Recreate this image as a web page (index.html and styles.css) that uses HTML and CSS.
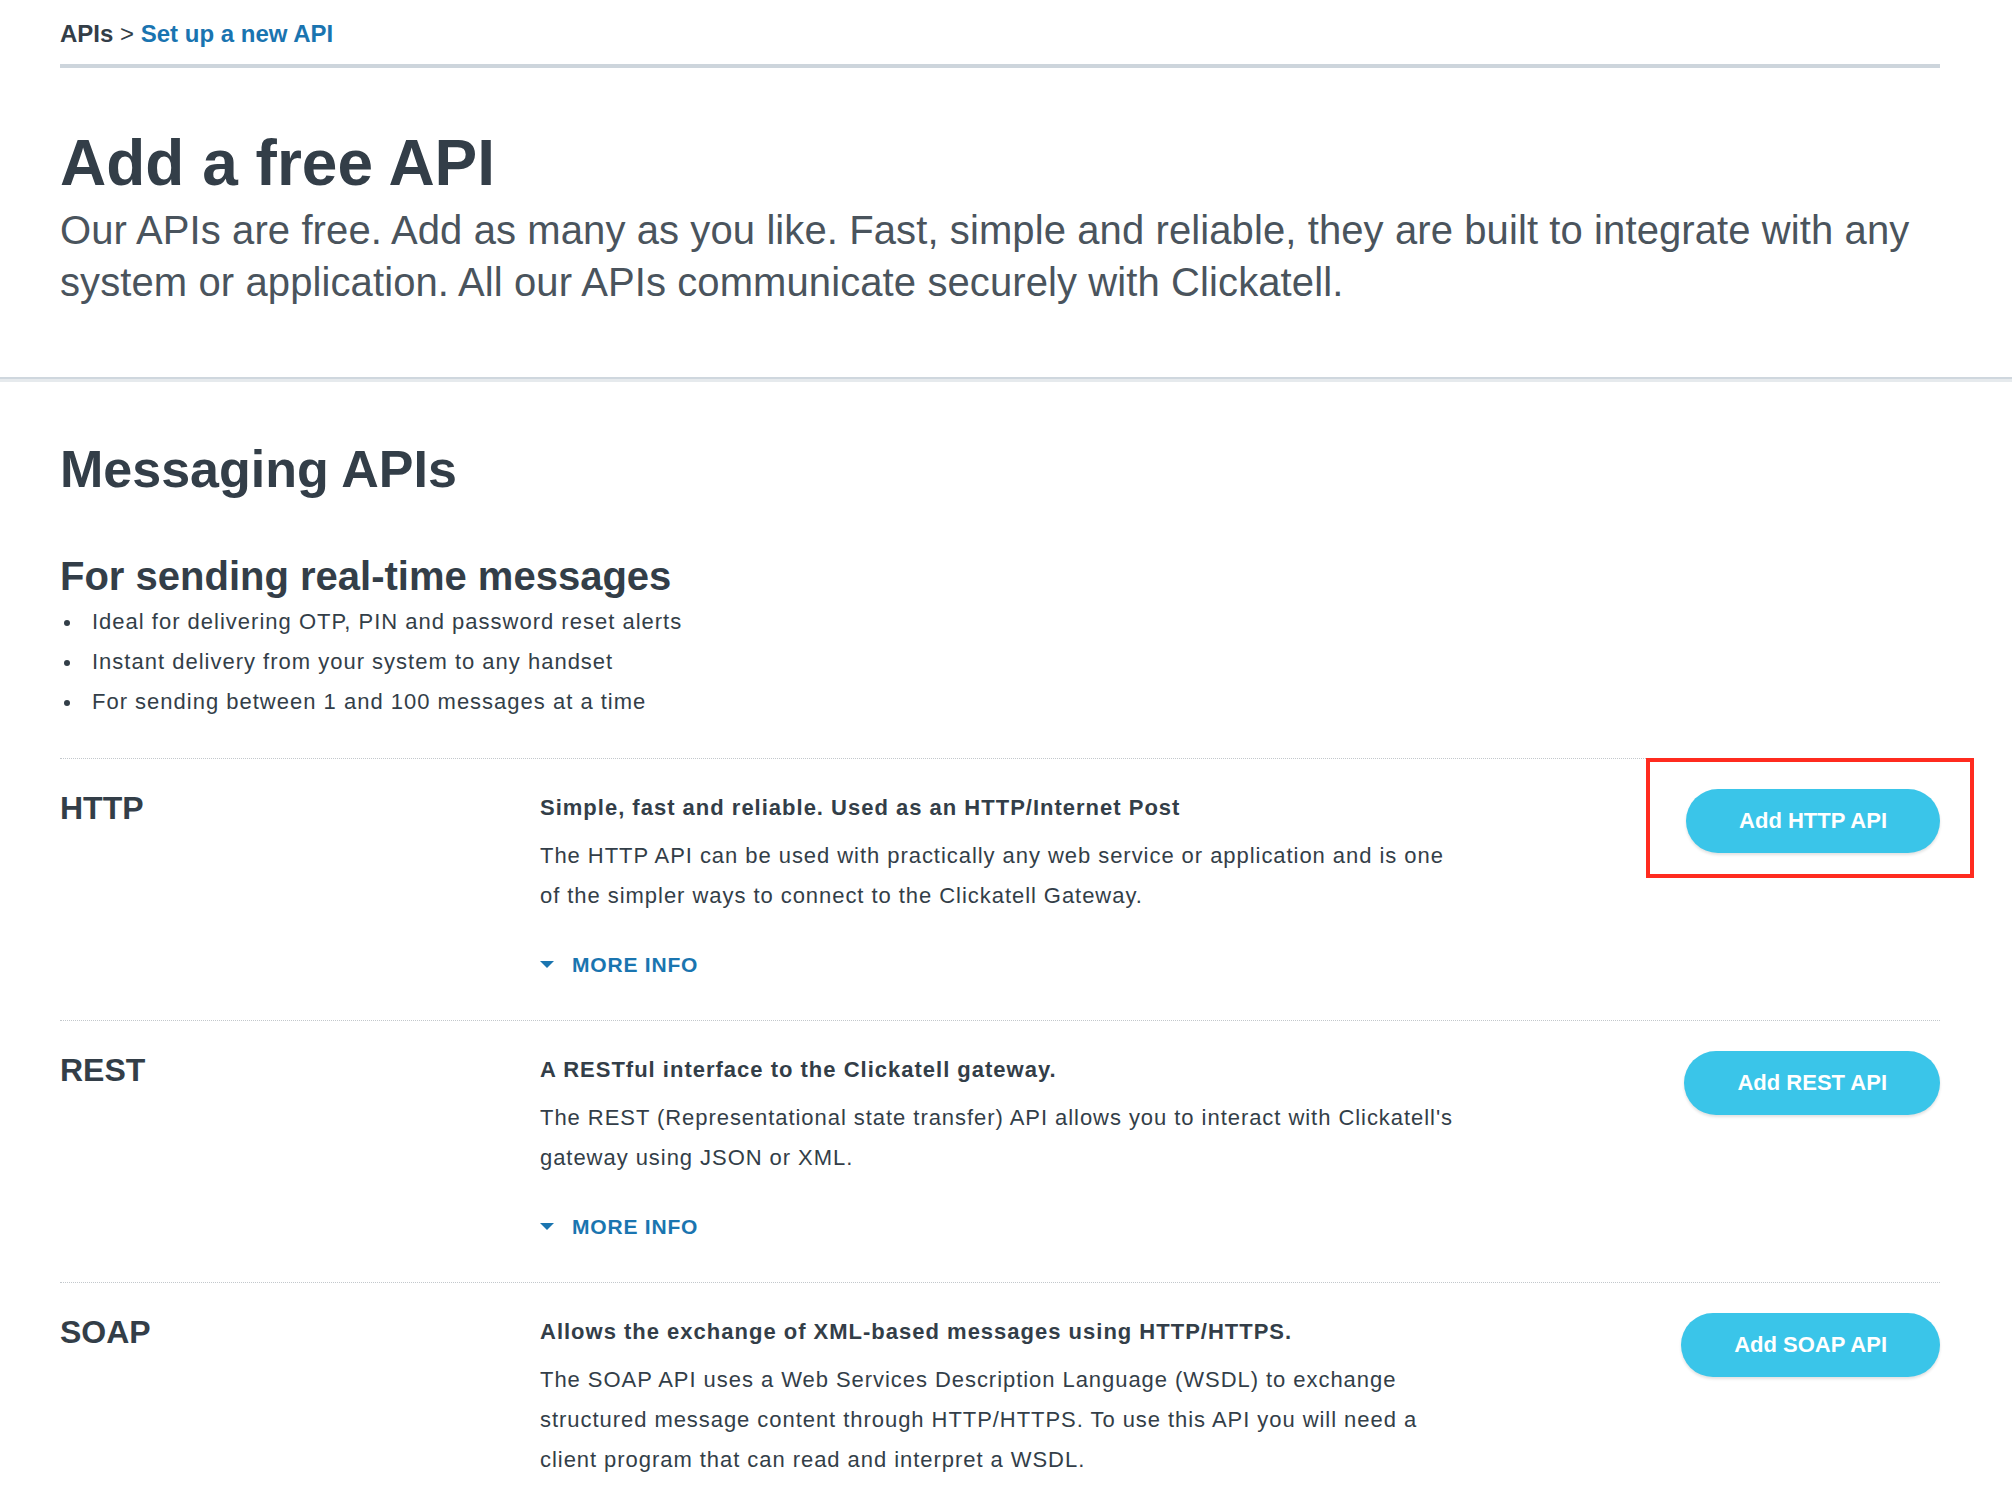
FILE: index.html
```html
<!DOCTYPE html>
<html lang="en">
<head>
    <meta charset="UTF-8">
    <title>Set up a new API</title>
    <link rel="stylesheet" href="styles.css">
</head>
<body>
<div class="wrap">
    <div class="crumbs">
        <span class="crumb-root">APIs</span> &gt; <a href="#" class="crumb-cur">Set up a new API</a>
    </div>
    <h1>Add a free API</h1>
    <p class="lead">Our APIs are free. Add as many as you like. Fast, simple and reliable, they are built to integrate with any system or application. All our APIs communicate securely with Clickatell.</p>
</div>
<div class="divider"></div>
<div class="wrap">
    <h2>Messaging APIs</h2>
    <h3>For sending real-time messages</h3>
    <ul class="points">
        <li>Ideal for delivering OTP, PIN and password reset alerts</li>
        <li>Instant delivery from your system to any handset</li>
        <li>For sending between 1 and 100 messages at a time</li>
    </ul>

    <div class="api">
        <div class="api-name">HTTP</div>
        <div class="api-info">
            <div class="api-title">Simple, fast and reliable. Used as an HTTP/Internet Post</div>
            <p>The HTTP API can be used with practically any web service or application and is one of the simpler ways to connect to the Clickatell Gateway.</p>
            <a href="#" class="more"><i class="caret"></i>MORE INFO</a>
        </div>
        <div class="api-action">
            <a href="#" class="btn">Add HTTP API</a>
            <div class="highlight"></div>
        </div>
    </div>

    <div class="api">
        <div class="api-name">REST</div>
        <div class="api-info">
            <div class="api-title">A RESTful interface to the Clickatell gateway.</div>
            <p>The REST (Representational state transfer) API allows you to interact with Clickatell's gateway using JSON or XML.</p>
            <a href="#" class="more"><i class="caret"></i>MORE INFO</a>
        </div>
        <div class="api-action">
            <a href="#" class="btn">Add REST API</a>
        </div>
    </div>

    <div class="api">
        <div class="api-name">SOAP</div>
        <div class="api-info">
            <div class="api-title">Allows the exchange of XML-based messages using HTTP/HTTPS.</div>
            <p>The SOAP API uses a Web Services Description Language (WSDL) to exchange structured message content through HTTP/HTTPS. To use this API you will need a client program that can read and interpret a WSDL.</p>
        </div>
        <div class="api-action">
            <a href="#" class="btn">Add SOAP API</a>
        </div>
    </div>
</div>
</body>
</html>
```

FILE: styles.css
```css
body{
    margin: 0;
    font-family: "Liberation Sans", Arial, sans-serif;
    color: #333e48;
    background: #fff;
}
a{
    text-decoration: none;
}
.wrap{
    width: 1880px;
    margin-left: 60px;
}
/*面包屑*/
.crumbs{
    padding-top: 19px;
    padding-bottom: 15px;
    line-height: 30px;
    font-size: 24px;
    border-bottom: 4px solid #cdd5dc;
}
.crumb-root{
    font-weight: bold;
}
.crumb-cur{
    font-weight: bold;
    color: #1a74b0;
}
h1{
    margin: 59px 0 0;
    font-size: 64px;
    line-height: 72px;
}
.lead{
    margin: 5px 0 0;
    padding-bottom: 69px;
    font-size: 40px;
    line-height: 52px;
    letter-spacing: 0.1px;
    color: #4a545d;
}
.divider{
    height: 3px;
    border-top: 2px solid #cfd7de;
    background: #e6eaed;
}
h2{
    margin: 57px 0 0;
    font-size: 52px;
    line-height: 60px;
}
h3{
    margin: 54px 0 0;
    font-size: 40px;
    line-height: 46px;
}
.points{
    margin: 3px 0 0;
    padding: 0;
    list-style: none;
    font-size: 22px;
    line-height: 40px;
    letter-spacing: 1px;
}
.points li{
    display: flex;
    align-items: center;
}
.points li:before{
    content: "";
    width: 6px;
    height: 6px;
    margin: 2px 22px 0 4px;
    border-radius: 50%;
    background: #333e48;
}
/*每一行API*/
.api{
    display: grid;
    grid-template-columns: 480px 925px 1fr;
    border-top: 1px dotted #c3c8cc;
    padding: 29px 0 35px;
}
.points + .api{
    margin-top: 36px;
}
.api-name{
    font-size: 32px;
    font-weight: bold;
    line-height: 40px;
}
.api-title{
    font-size: 22px;
    font-weight: bold;
    line-height: 40px;
    letter-spacing: 1px;
}
.api-info p{
    margin: 8px 0 0;
    font-size: 22px;
    line-height: 40px;
    letter-spacing: 0.95px;
}
.more{
    display: inline-block;
    margin-top: 29px;
    font-size: 21px;
    font-weight: bold;
    line-height: 40px;
    letter-spacing: 0.8px;
    color: #1a75b0;
}
.caret{
    display: inline-block;
    vertical-align: middle;
    margin: -4px 18px 0 0;
    border-left: 7px solid transparent;
    border-right: 7px solid transparent;
    border-top: 7px solid #1a75b0;
}
.api-action{
    position: relative;
    justify-self: end;
    margin-top: 1px;
}
.btn{
    display: block;
    height: 64px;
    padding: 0 53px;
    border-radius: 32px;
    background: #3ac5e9;
    box-shadow: 0 2px 3px rgba(0,0,0,0.12);
    color: #fff;
    font-size: 22px;
    font-weight: bold;
    line-height: 64px;
}
/*标注的红框*/
.highlight{
    position: absolute;
    left: -40px;
    top: -31px;
    width: 328px;
    height: 120px;
    box-sizing: border-box;
    border: 4px solid #ff2b1f;
}
```
